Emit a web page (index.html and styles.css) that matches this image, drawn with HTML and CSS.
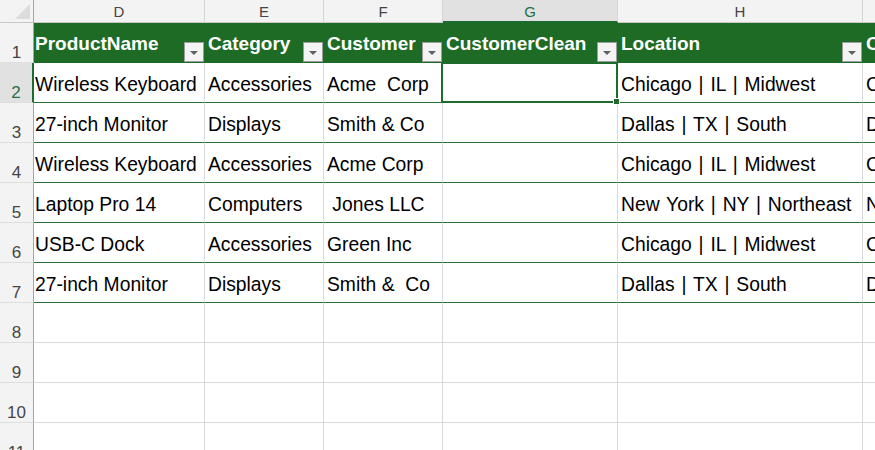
FILE: index.html
```html
<!DOCTYPE html>
<html>
<head>
<meta charset="utf-8">
<link rel="stylesheet" href="styles.css">
</head>
<body>
<div class="sheet">
  <div class="corner"><span class="tri"></span></div>
  <div class="colhead">D</div>
  <div class="colhead">E</div>
  <div class="colhead">F</div>
  <div class="colhead sel">G</div>
  <div class="colhead">H</div>
  <div class="colhead">I</div>

  <div class="rowhead">1</div>
  <div class="th first"><span>ProductName</span><span class="filter"></span></div>
  <div class="th"><span>Category</span><span class="filter"></span></div>
  <div class="th"><span>Customer</span><span class="filter"></span></div>
  <div class="th"><span>CustomerClean</span><span class="filter"></span></div>
  <div class="th"><span>Location</span><span class="filter"></span></div>
  <div class="th"><span>City</span><span class="filter"></span></div>

  <div class="rowhead sel">2</div>
  <div class="td first">Wireless Keyboard</div>
  <div class="td">Accessories</div>
  <div class="td">Acme  Corp</div>
  <div class="td active"><div class="selbox"><span class="handle"></span></div></div>
  <div class="td loc">Chicago | IL | Midwest</div>
  <div class="td">Chicago</div>

  <div class="rowhead">3</div>
  <div class="td first">27-inch Monitor</div>
  <div class="td">Displays</div>
  <div class="td">Smith &amp; Co</div>
  <div class="td"></div>
  <div class="td loc">Dallas | TX | South</div>
  <div class="td">Dallas</div>

  <div class="rowhead">4</div>
  <div class="td first">Wireless Keyboard</div>
  <div class="td">Accessories</div>
  <div class="td">Acme Corp</div>
  <div class="td"></div>
  <div class="td loc">Chicago | IL | Midwest</div>
  <div class="td">Chicago</div>

  <div class="rowhead">5</div>
  <div class="td first">Laptop Pro 14</div>
  <div class="td">Computers</div>
  <div class="td"> Jones LLC</div>
  <div class="td"></div>
  <div class="td loc">New York | NY | Northeast</div>
  <div class="td">New York</div>

  <div class="rowhead">6</div>
  <div class="td first">USB-C Dock</div>
  <div class="td">Accessories</div>
  <div class="td">Green Inc</div>
  <div class="td"></div>
  <div class="td loc">Chicago | IL | Midwest</div>
  <div class="td">Chicago</div>

  <div class="rowhead">7</div>
  <div class="td first">27-inch Monitor</div>
  <div class="td">Displays</div>
  <div class="td">Smith &amp;  Co</div>
  <div class="td"></div>
  <div class="td loc">Dallas | TX | South</div>
  <div class="td">Dallas</div>

  <div class="rowhead">8</div>
  <div class="empty"></div><div class="empty"></div><div class="empty"></div><div class="empty"></div><div class="empty"></div><div class="empty"></div>
  <div class="rowhead">9</div>
  <div class="empty"></div><div class="empty"></div><div class="empty"></div><div class="empty"></div><div class="empty"></div><div class="empty"></div>
  <div class="rowhead">10</div>
  <div class="empty"></div><div class="empty"></div><div class="empty"></div><div class="empty"></div><div class="empty"></div><div class="empty"></div>
  <div class="rowhead">11</div>
  <div class="empty"></div><div class="empty"></div><div class="empty"></div><div class="empty"></div><div class="empty"></div><div class="empty"></div>
</div>
</body>
</html>
```
FILE: styles.css
```css
html, body {
  margin: 0;
  padding: 0;
  background: #ffffff;
}
.sheet {
  width: 875px;
  height: 450px;
  overflow: hidden;
  display: grid;
  grid-template-columns: 34px 171px 119px 119px 175px 245px 140px;
  grid-template-rows: 23px repeat(11, 40px);
  font-family: "Liberation Sans", Arial, sans-serif;
  color: #000;
}
.sheet > div {
  box-sizing: border-box;
  min-width: 0;
}
.corner {
  background: #f3f3f3;
  border-right: 1px solid #a6a6a6;
  border-bottom: 1px solid #c8c8c8;
  position: relative;
}
.tri {
  position: absolute;
  right: 3px;
  bottom: 3px;
  width: 0;
  height: 0;
  border-left: 15px solid transparent;
  border-bottom: 15px solid #dcdcdc;
}
.colhead {
  background: #f3f3f3;
  border-right: 1px solid #d4d4d4;
  border-bottom: 1px solid #c8c8c8;
  display: flex;
  align-items: center;
  justify-content: center;
  font-size: 15px;
  color: #454545;
  padding-top: 1px;
}
.colhead.sel {
  background: #e1e1e1;
  color: #1e7145;
  border-bottom: 2px solid #1e6b2e;
}
.rowhead {
  background: #f3f3f3;
  border-right: 1px solid #a6a6a6;
  border-bottom: 1px solid #dedede;
  display: flex;
  align-items: flex-end;
  justify-content: center;
  font-size: 17px;
  line-height: 19px;
  color: #454545;
}
.rowhead.sel {
  background: #e1e1e1;
  color: #1e7145;
  border-right: 2px solid #1e6b2e;
}
.th {
  background: #1d6b25;
  color: #ffffff;
  font-weight: bold;
  font-size: 19px;
  display: flex;
  justify-content: space-between;
  align-items: center;
  padding: 2px 1px 0 3px;
  white-space: nowrap;
  overflow: hidden;
}
.th.first {
  padding-left: 1px;
}
.filter {
  flex: none;
  align-self: flex-end;
  width: 20px;
  height: 20px;
  margin-bottom: 1px;
  margin-left: 4px;
  box-sizing: border-box;
  border: 1px solid #9c9c9c;
  background: #f4f4f4;
  position: relative;
}
.filter::after {
  content: "";
  position: absolute;
  left: 5px;
  top: 8px;
  border-left: 4px solid transparent;
  border-right: 4px solid transparent;
  border-top: 4px solid #606060;
}
.td {
  border-right: 1px solid #dadada;
  border-bottom: 1px solid #2a7034;
  font-size: 19.3px;
  white-space: pre;
  overflow: hidden;
  display: flex;
  align-items: center;
  padding: 4px 0 0 3px;
}
.td.first {
  padding-left: 1px;
}
.td.loc {
  word-spacing: 1.5px;
}
.td.active {
  position: relative;
  overflow: visible;
}
.selbox {
  position: absolute;
  top: -1px;
  left: -2px;
  right: -1px;
  bottom: -1px;
  border: 2px solid #1e6b2e;
  z-index: 2;
}
.handle {
  position: absolute;
  right: -4px;
  bottom: -4px;
  width: 5px;
  height: 5px;
  background: #1e6b2e;
  border: 1px solid #ffffff;
}
.empty {
  border-right: 1px solid #dadada;
  border-bottom: 1px solid #dadada;
}
```
